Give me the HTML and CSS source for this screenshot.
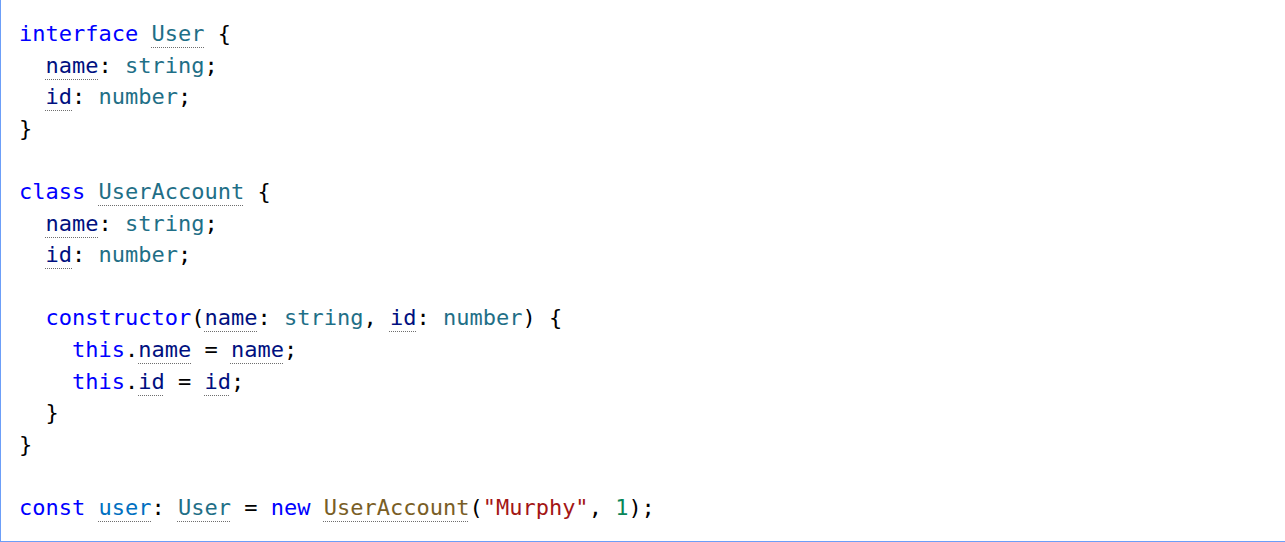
FILE: index.html
```html
<!DOCTYPE html>
<html>
<head>
<meta charset="utf-8">
<link rel="stylesheet" href="styles.css">
</head>
<body>
<div class="frame">
<pre class="code"><span class="kw">interface</span> <span class="ty ref">User</span> {
  <span class="pr ref">name</span>: <span class="ty">string</span>;
  <span class="pr ref">id</span>: <span class="ty">number</span>;
}

<span class="kw">class</span> <span class="ty ref">UserAccount</span> {
  <span class="pr ref">name</span>: <span class="ty">string</span>;
  <span class="pr ref">id</span>: <span class="ty">number</span>;

  <span class="kw">constructor</span>(<span class="pr ref">name</span>: <span class="ty">string</span>, <span class="pr ref">id</span>: <span class="ty">number</span>) {
    <span class="kw">this</span>.<span class="pr ref">name</span> = <span class="pr ref">name</span>;
    <span class="kw">this</span>.<span class="pr ref">id</span> = <span class="pr ref">id</span>;
  }
}

<span class="kw">const</span> <span class="va ref">user</span>: <span class="ty ref">User</span> = <span class="kw">new</span> <span class="fn ref">UserAccount</span>(<span class="st">"Murphy"</span>, <span class="nu">1</span>);</pre>
</div>
</body>
</html>
```
FILE: styles.css
```css
html, body {
  margin: 0;
  padding: 0;
  background: #fff;
}
.frame {
  box-sizing: border-box;
  width: 1285px;
  height: 542px;
  border-left: 1px solid #6c9ef8;
  border-bottom: 1px solid #6c9ef8;
  padding: 18px 0 0 18px;
  overflow: hidden;
}
.code {
  margin: 0;
  font-family: "DejaVu Sans Mono", "Liberation Mono", monospace;
  font-size: 22px;
  line-height: 31.6px;
  color: #000;
}
.kw { color: #0000ff; }
.ty { color: #1f6f87; }
.pr { color: #001080; }
.va { color: #0070c1; }
.fn { color: #795e26; }
.st { color: #a31515; }
.nu { color: #098658; }
.ref {
  text-decoration: underline dotted #6e6e6e;
  text-decoration-thickness: 1px;
  text-underline-offset: 6px;
}
```
